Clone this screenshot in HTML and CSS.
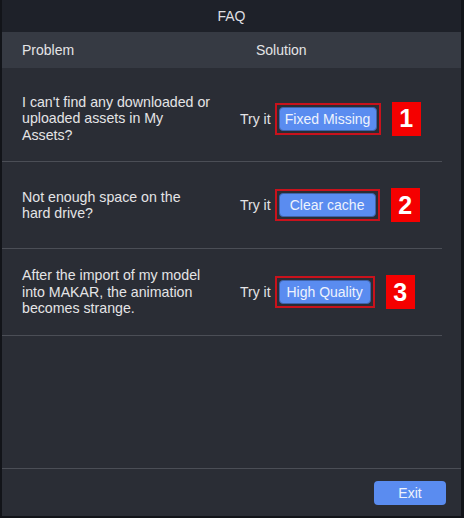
FILE: index.html
```html
<!DOCTYPE html>
<html>
  <head>
    <title>FAQ</title>
    <link rel="stylesheet" href="styles.css">
  </head>
  <body>
    <div class="window">
      <div class="titlebar">FAQ</div>

      <div class="head">
        <span class="head-problem">Problem</span>
        <span class="head-solution">Solution</span>
      </div>

      <div class="list">
        <div class="row first">
          <div class="problem-cell">
            <p class="problem">I can't find any downloaded or uploaded assets in My Assets?</p>
          </div>
          <div class="solution">
            <span class="try">Try it</span>
            <span class="mark"><button class="btn btn-missing">Fixed Missing</button></span>
            <span class="badge">1</span>
          </div>
        </div>

        <div class="row">
          <div class="problem-cell">
            <p class="problem">Not enough space on the hard drive?</p>
          </div>
          <div class="solution">
            <span class="try">Try it</span>
            <span class="mark"><button class="btn btn-cache">Clear cache</button></span>
            <span class="badge">2</span>
          </div>
        </div>

        <div class="row">
          <div class="problem-cell">
            <p class="problem">After the import of my model into MAKAR, the animation becomes strange.</p>
          </div>
          <div class="solution">
            <span class="try">Try it</span>
            <span class="mark"><button class="btn btn-quality">High Quality</button></span>
            <span class="badge">3</span>
          </div>
        </div>
      </div>

      <div class="footer">
        <button class="exit">Exit</button>
      </div>
    </div>
  </body>
</html>
```

FILE: styles.css
```css
*{
  margin:0;
  padding:0;
  box-sizing:border-box;
}

body{
  background-color:#121419;
  font-family:"Liberation Sans", Arial, sans-serif;
  font-size:14px;
  color:#e4e4e6;
}

.window{
  width:459px;
  height:516px;
  margin-left:2px;
  background-color:#2a2d35;
  display:flex;
  flex-direction:column;
}

.titlebar{
  height:32px;
  background-color:#1e2129;
  display:flex;
  justify-content:center;
  align-items:center;
  color:#dedfe2;
}

.head{
  height:36px;
  background-color:#363a43;
  display:flex;
  align-items:center;
  padding-left:20px;
}

.head-problem{
  width:234px;
}

.list{
  flex:1;
  padding-right:19px;
}

.row{
  height:87px;
  display:flex;
  align-items:center;
  padding-left:20px;
  border-bottom:1px solid #4b4e56;
}

.row.first{
  height:94px;
  padding-top:8px;
}

.problem-cell{
  width:214px;
}

.problem{
  width:189px;
  font-size:14.2px;
  line-height:16.5px;
}

.solution{
  display:flex;
  align-items:center;
  margin-left:4px;
}

.try{
  margin-right:4px;
}

.mark{
  display:flex;
  padding:2px;
  border:2px solid #c9121c;
}

.btn{
  height:24px;
  border:1px solid #3f62a8;
  border-radius:4px;
  background-color:#5a8cf0;
  color:#eef3fd;
  font-family:inherit;
  font-size:14px;
}

.btn-missing{
  width:98px;
}

.btn-cache{
  width:97px;
}

.btn-quality{
  width:92px;
}

.badge{
  width:29px;
  height:34px;
  margin-left:11px;
  background-color:#f50000;
  color:white;
  font-size:25px;
  font-weight:bold;
  display:flex;
  justify-content:center;
  align-items:center;
}

.footer{
  height:48px;
  border-top:1px solid #4b4e56;
  display:flex;
  justify-content:flex-end;
  align-items:center;
  padding-right:15px;
}

.exit{
  width:72px;
  height:24px;
  border:none;
  border-radius:4px;
  background-color:#5a8cf0;
  color:#eef3fd;
  font-family:inherit;
  font-size:14px;
}
```
